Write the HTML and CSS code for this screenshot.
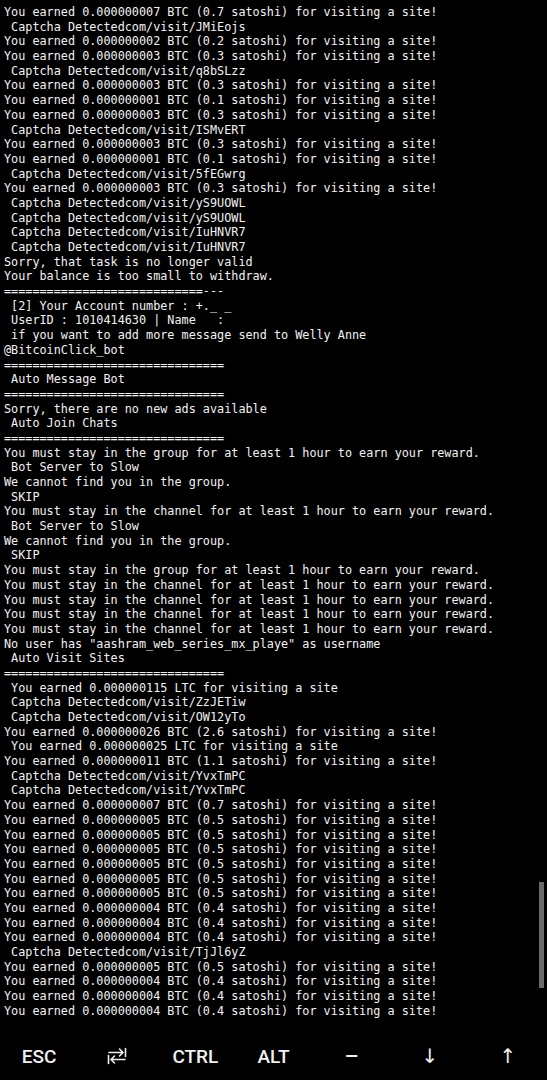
FILE: index.html
```html
<!DOCTYPE html>
<html>
<head>
<meta charset="utf-8">
<link rel="stylesheet" href="styles.css">
</head>
<body>
<div class="term">
<pre class="out">You earned 0.000000007 BTC (0.7 satoshi) for visiting a site!
 Captcha Detectedcom/visit/JMiEojs
You earned 0.000000002 BTC (0.2 satoshi) for visiting a site!
You earned 0.000000003 BTC (0.3 satoshi) for visiting a site!
 Captcha Detectedcom/visit/q8bSLzz
You earned 0.000000003 BTC (0.3 satoshi) for visiting a site!
You earned 0.000000001 BTC (0.1 satoshi) for visiting a site!
You earned 0.000000003 BTC (0.3 satoshi) for visiting a site!
 Captcha Detectedcom/visit/ISMvERT
You earned 0.000000003 BTC (0.3 satoshi) for visiting a site!
You earned 0.000000001 BTC (0.1 satoshi) for visiting a site!
 Captcha Detectedcom/visit/5fEGwrg
You earned 0.000000003 BTC (0.3 satoshi) for visiting a site!
 Captcha Detectedcom/visit/yS9UOWL
 Captcha Detectedcom/visit/yS9UOWL
 Captcha Detectedcom/visit/IuHNVR7
 Captcha Detectedcom/visit/IuHNVR7
Sorry, that task is no longer valid
Your balance is too small to withdraw.
============================---
 [2] Your Account number : +._ _
 UserID : 1010414630 | Name   :
 if you want to add more message send to Welly Anne
@BitcoinClick_bot
===============================
 Auto Message Bot
===============================
Sorry, there are no new ads available
 Auto Join Chats
===============================
You must stay in the group for at least 1 hour to earn your reward.
 Bot Server to Slow
We cannot find you in the group.
 SKIP
You must stay in the channel for at least 1 hour to earn your reward.
 Bot Server to Slow
We cannot find you in the group.
 SKIP
You must stay in the group for at least 1 hour to earn your reward.
You must stay in the channel for at least 1 hour to earn your reward.
You must stay in the channel for at least 1 hour to earn your reward.
You must stay in the channel for at least 1 hour to earn your reward.
You must stay in the channel for at least 1 hour to earn your reward.
No user has "aashram_web_series_mx_playe" as username
 Auto Visit Sites
===============================
 You earned 0.000000115 LTC for visiting a site
 Captcha Detectedcom/visit/ZzJETiw
 Captcha Detectedcom/visit/OW12yTo
You earned 0.000000026 BTC (2.6 satoshi) for visiting a site!
 You earned 0.000000025 LTC for visiting a site
You earned 0.000000011 BTC (1.1 satoshi) for visiting a site!
 Captcha Detectedcom/visit/YvxTmPC
 Captcha Detectedcom/visit/YvxTmPC
You earned 0.000000007 BTC (0.7 satoshi) for visiting a site!
You earned 0.000000005 BTC (0.5 satoshi) for visiting a site!
You earned 0.000000005 BTC (0.5 satoshi) for visiting a site!
You earned 0.000000005 BTC (0.5 satoshi) for visiting a site!
You earned 0.000000005 BTC (0.5 satoshi) for visiting a site!
You earned 0.000000005 BTC (0.5 satoshi) for visiting a site!
You earned 0.000000005 BTC (0.5 satoshi) for visiting a site!
You earned 0.000000004 BTC (0.4 satoshi) for visiting a site!
You earned 0.000000004 BTC (0.4 satoshi) for visiting a site!
You earned 0.000000004 BTC (0.4 satoshi) for visiting a site!
 Captcha Detectedcom/visit/TjJl6yZ
You earned 0.000000005 BTC (0.5 satoshi) for visiting a site!
You earned 0.000000004 BTC (0.4 satoshi) for visiting a site!
You earned 0.000000004 BTC (0.4 satoshi) for visiting a site!
You earned 0.000000004 BTC (0.4 satoshi) for visiting a site!</pre>
<div class="scrollbar"></div>
</div>
<div class="keys">
  <span class="key">ESC</span>
  <span class="key"><svg class="tab" width="20" height="18" viewBox="0 0 20 18"><g fill="none" stroke="#f0f0f0" stroke-width="1.6" stroke-linecap="round" stroke-linejoin="round"><path d="M2 5.5H16M12.5 2L16 5.5L12.5 9M18.5 1.5V9.5"/><path d="M18 12.5H4M7.5 9L4 12.5L7.5 16M1.5 8.5V16.5"/></g></svg></span>
  <span class="key">CTRL</span>
  <span class="key">ALT</span>
  <span class="key dash">–</span>
  <span class="key arrow">↓</span>
  <span class="key arrow">↑</span>
</div>
</body>
</html>
```
FILE: styles.css
```css
html, body {
  margin: 0;
  padding: 0;
  background: #000;
}
body {
  width: 547px;
  height: 1080px;
  display: flex;
  flex-direction: column;
  overflow: hidden;
}
.term {
  position: relative;
  flex: 1;
  padding: 5px 0 0 4px;
}
.out {
  margin: 0;
  font-family: "DejaVu Sans Mono", monospace;
  font-size: 11.8px;
  line-height: 14.69px;
  color: #f2f2f2;
  white-space: pre;
}
.scrollbar {
  position: absolute;
  right: 3px;
  top: 882px;
  width: 5px;
  height: 106px;
  background: #6a6a6a;
}
.keys {
  height: 48px;
  display: grid;
  grid-template-columns: repeat(7, 1fr);
  align-items: center;
}
.key {
  display: flex;
  justify-content: center;
  align-items: center;
  font-family: Roboto, "Liberation Sans", sans-serif;
  font-size: 19px;
  font-weight: 500;
  color: #f0f0f0;
}
.dash {
  font-size: 22px;
}
.arrow {
  font-family: "DejaVu Sans", sans-serif;
  font-weight: 400;
  font-size: 20px;
}
.tab {
  display: block;
}
```
